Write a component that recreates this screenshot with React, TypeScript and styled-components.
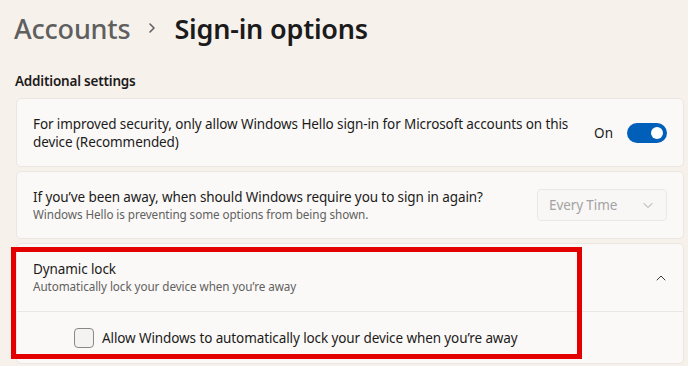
import React from "react";
import styled, { createGlobalStyle } from "styled-components";

const Global = createGlobalStyle`
  html, body { margin: 0; padding: 0; background: #f7f1ec; }
  body { font-family: "Segoe UI", "Noto Sans", "Liberation Sans", sans-serif; color: #1b1b1b; }
  * { box-sizing: border-box; }
`;

const Page = styled.div`
  width: 688px;
  height: 366px;
  overflow: hidden;
  background: #f7f1ec;
  padding: 8px 4px 0 16px;
`;

const Header = styled.div`
  display: flex;
  align-items: center;
  height: 40px;
  margin-left: -2px;
  font-size: 27px;
`;

const Crumb = styled.span<{ $current?: boolean }>`
  color: ${(p) => (p.$current ? "#1b1b1b" : "#5f5f5f")};
  font-weight: ${(p) => (p.$current ? 600 : 500)};
  letter-spacing: -0.2px;
`;

const Sep = styled.span`
  display: inline-flex;
  align-items: center;
  width: 44px;
  justify-content: center;
  color: #5f5f5f;
`;

const SectionLabel = styled.div`
  margin-top: 24px;
  margin-left: -1px;
  font-size: 13.5px;
  letter-spacing: -0.2px;
  font-weight: 600;
  height: 26px;
  line-height: 18px;
`;

const Stack = styled.div`
  display: flex;
  flex-direction: column;
  gap: 4px;
`;

const Card = styled.div<{ $h?: number }>`
  background: #fbf9f7;
  border: 1px solid #ebe6e1;
  border-radius: 5px;
  min-height: ${(p) => p.$h ?? 68}px;
  display: flex;
  align-items: center;
  padding: 0 16px;
  gap: 16px;
`;

const TextCol = styled.div`
  flex: 1;
  display: flex;
  flex-direction: column;
`;

const Title = styled.div`
  font-size: 13.5px;
  letter-spacing: -0.1px;
  line-height: 18px;
  color: #1b1b1b;
`;

const Sub = styled.div`
  font-size: 11.7px;
  letter-spacing: -0.07px;
  line-height: 17px;
  color: #616161;
`;

const ToggleWrap = styled.div`
  display: flex;
  align-items: center;
  gap: 14px;
  font-size: 13.5px;
`;

const Toggle = styled.div`
  width: 40px;
  height: 20px;
  border-radius: 10px;
  background: #005fb8;
  display: flex;
  align-items: center;
  justify-content: flex-end;
  padding-right: 4px;
`;

const Knob = styled.div`
  width: 12px;
  height: 12px;
  border-radius: 50%;
  background: #ffffff;
`;

const Select = styled.div`
  width: 130px;
  height: 32px;
  border: 1px solid #ebe7e4;
  border-radius: 4px;
  background: #f9f7f5;
  display: flex;
  align-items: center;
  justify-content: space-between;
  padding: 0 12px 0 11px;
  font-size: 13.5px;
  letter-spacing: -0.1px;
  color: #a3a3a3;
`;

const ExpanderWrap = styled.div`
  position: relative;
`;

const Expander = styled.div`
  background: #fbf9f7;
  border: 1px solid #ebe6e1;
  border-radius: 5px;
`;

const ExpHeader = styled.div`
  height: 68px;
  display: flex;
  align-items: center;
  padding: 0 16px;
  border-bottom: 1px solid #ebe6e1;
`;

const ExpBody = styled.div`
  height: 51px;
  display: flex;
  align-items: center;
  padding-left: 57px;
  gap: 8px;
  font-size: 13.5px;
  letter-spacing: -0.1px;
`;

const Check = styled.div`
  width: 20px;
  height: 20px;
  border: 1px solid #8a8886;
  border-radius: 4px;
  background: #f5f3f1;
`;

const Highlight = styled.div`
  position: absolute;
  left: -5px;
  top: 4px;
  width: 571px;
  height: 112px;
  border: 5px solid #e30000;
  pointer-events: none;
`;

const Chevron = ({ up, color }: { up?: boolean; color: string }) => (
  <svg width="12" height="12" viewBox="0 0 12 12" fill="none">
    <path
      d={up ? "M2 8 L6 4 L10 8" : "M2 4.5 L6 8.5 L10 4.5"}
      stroke={color}
      strokeWidth="1"
      strokeLinecap="round"
      strokeLinejoin="round"
    />
  </svg>
);

export default function App() {
  return (
    <>
      <Global />
      <Page>
        <Header>
          <Crumb>Accounts</Crumb>
          <Sep>
            <svg width="12" height="12" viewBox="0 0 12 12" fill="none">
              <path d="M4 2 L8 6 L4 10" stroke="#5f5f5f" strokeWidth="1.6" strokeLinecap="round" strokeLinejoin="round" />
            </svg>
          </Sep>
          <Crumb $current>Sign-in options</Crumb>
        </Header>
        <SectionLabel>Additional settings</SectionLabel>
        <Stack>
          <Card $h={69}>
            <TextCol>
              <Title>
                For improved security, only allow Windows Hello sign-in for Microsoft accounts on this device (Recommended)
              </Title>
            </TextCol>
            <ToggleWrap>
              <span>On</span>
              <Toggle>
                <Knob />
              </Toggle>
            </ToggleWrap>
          </Card>
          <Card>
            <TextCol>
              <Title>If you’ve been away, when should Windows require you to sign in again?</Title>
              <Sub>Windows Hello is preventing some options from being shown.</Sub>
            </TextCol>
            <Select>
              <span>Every Time</span>
              <Chevron color="#a3a3a3" />
            </Select>
          </Card>
          <ExpanderWrap>
            <Expander>
              <ExpHeader>
                <TextCol>
                  <Title>Dynamic lock</Title>
                  <Sub>Automatically lock your device when you’re away</Sub>
                </TextCol>
                <Chevron up color="#3b3b3b" />
              </ExpHeader>
              <ExpBody>
                <Check />
                <span>Allow Windows to automatically lock your device when you’re away</span>
              </ExpBody>
            </Expander>
            <Highlight />
          </ExpanderWrap>
        </Stack>
      </Page>
    </>
  );
}
